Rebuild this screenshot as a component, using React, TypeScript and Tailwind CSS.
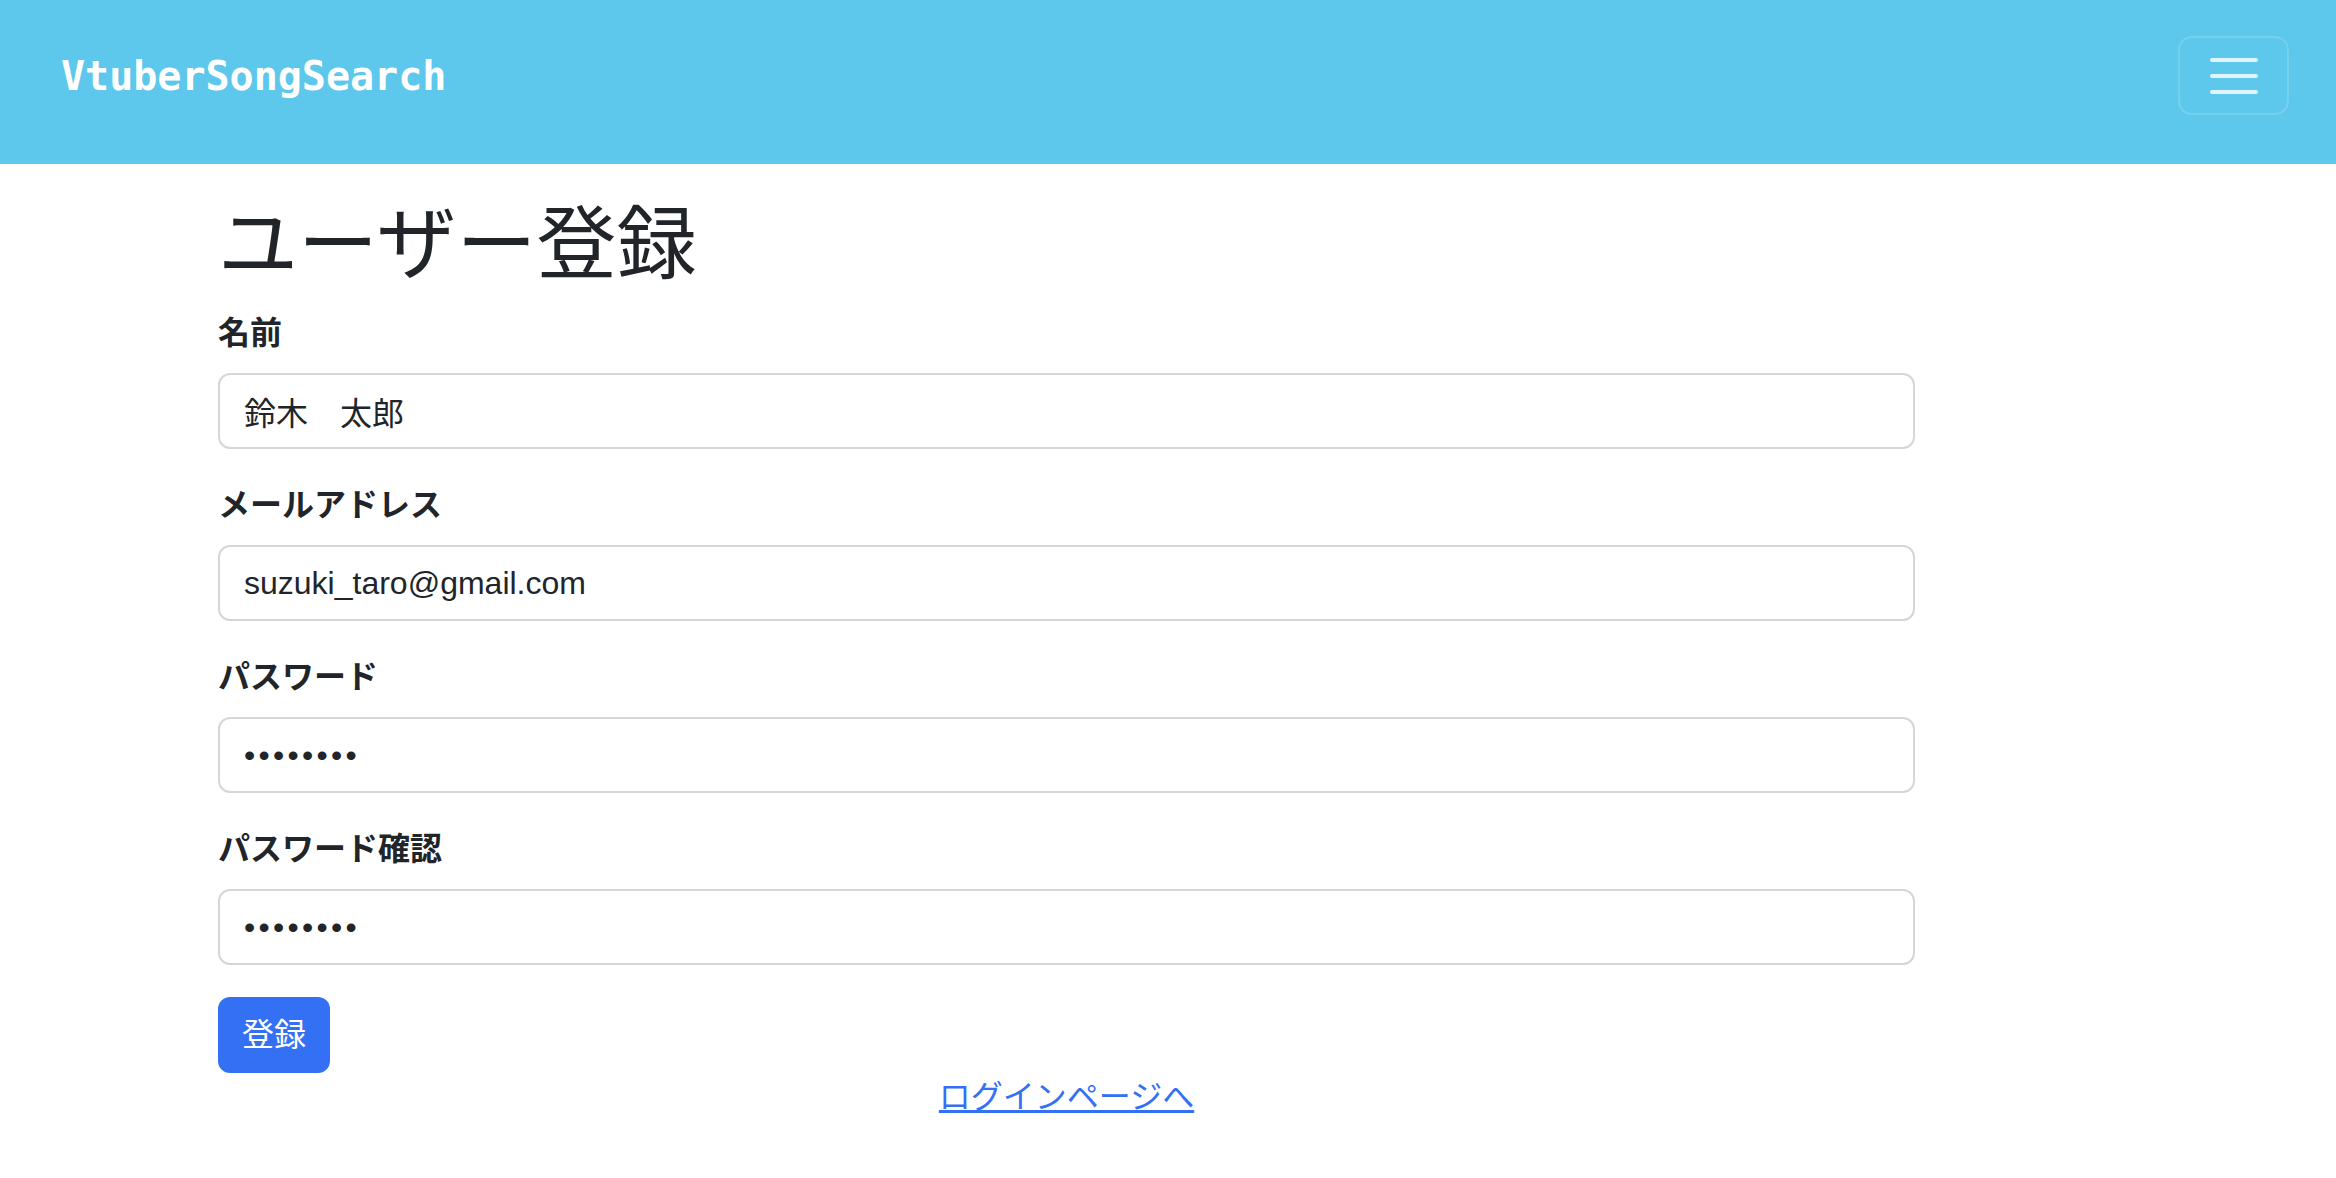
import React from 'react';

const FONT = '"Liberation Sans", "Noto Sans CJK JP", sans-serif';

interface FieldProps {
  label: string;
  value: string;
  secret?: boolean;
}

function Field({ label, value, secret }: FieldProps) {
  return (
    <div className="mb-[32px]">
      <label className="block mb-[16px] text-[32px] leading-[48px] font-bold text-[#212529]">
        {label}
      </label>
      <input
        type="text"
        readOnly
        value={value}
        className={
          'block w-full h-[76px] px-[24px] border-2 border-[#d3d7db] rounded-[12px] bg-white text-[32px] text-[#212529] outline-none ' +
          (secret ? 'tracking-[3.3px]' : '')
        }
        style={{ fontFamily: FONT }}
      />
    </div>
  );
}

export default function App() {
  return (
    <div className="min-h-screen bg-white" style={{ fontFamily: FONT }}>
      {/* navbar */}
      <nav className="h-[164px] bg-[#5dc8ec] flex items-center justify-between pl-[61px] pr-[47px] pb-[13px]">
        <a
          href="#"
          className="text-white font-bold text-[40px] leading-none"
          style={{ fontFamily: '"DejaVu Sans Mono", monospace' }}
        >
          VtuberSongSearch
        </a>
        <button className="w-[111px] h-[79px] border-2 border-white/15 rounded-[14px] flex flex-col items-center justify-center gap-[12px]">
          <span className="block w-[48px] h-[4px] rounded-full bg-white/80" />
          <span className="block w-[48px] h-[4px] rounded-full bg-white/80" />
          <span className="block w-[48px] h-[4px] rounded-full bg-white/80" />
        </button>
      </nav>

      {/* form */}
      <main className="ml-[218px] w-[1697px] pt-[33px]">
        <h1 className="text-[80px] leading-[96px] font-normal text-[#212529] mb-[16px]">ユーザー登録</h1>
        <Field label="名前" value="鈴木　太郎" />
        <Field label="メールアドレス" value="suzuki_taro@gmail.com" />
        <Field label="パスワード" value="••••••••" secret />
        <Field label="パスワード確認" value="••••••••" secret />
        <button className="h-[76px] px-[24px] rounded-[12px] bg-[#3470f3] text-white text-[32px] leading-[48px]">
          登録
        </button>
        <div className="text-center text-[32px] leading-[48px]">
          <a href="#" className="text-[#3470f3] underline">
            ログインページへ
          </a>
        </div>
      </main>
    </div>
  );
}
